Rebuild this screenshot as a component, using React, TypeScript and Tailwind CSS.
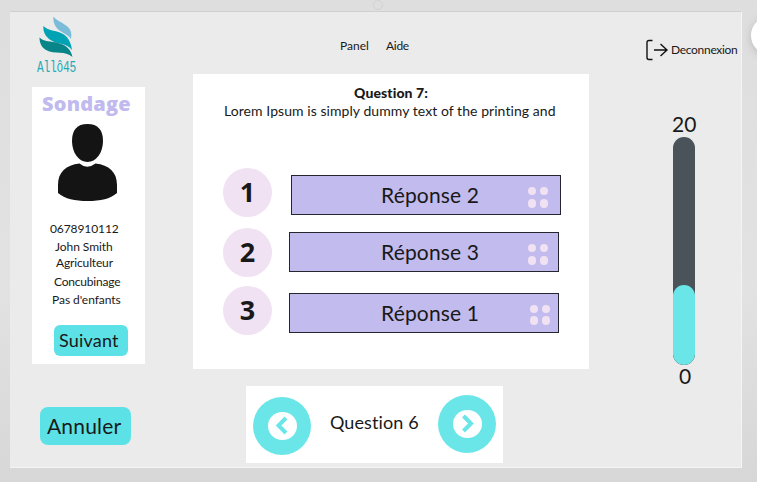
import React from "react";

const profile = [
  { text: "0678910112", style: "mt-[19px] pl-[18px] tracking-[-0.1px]" },
  { text: "John Smith", style: "mt-[2px] pl-[23px] tracking-[-0.05px]" },
  { text: "Agriculteur", style: "pl-[24px] tracking-[-0.15px]" },
  { text: "Concubinage", style: "mt-[3px] pl-[22px] tracking-[-0.2px]" },
  { text: "Pas d'enfants", style: "mt-[2px] pl-[20px] tracking-[-0.05px]" },
];

const answers = [
  {
    rank: 1,
    text: "Réponse 2",
    row: "h-[49px]",
    box: "ml-[19px] mt-[7px] w-[270px] pl-[89px]",
    dots: "mr-[12px] mt-[4px] gap-y-[4px]",
  },
  {
    rank: 2,
    text: "Réponse 3",
    row: "mt-[11px] h-[49px]",
    box: "ml-[17px] mt-[4px] w-[270px] pl-[91px]",
    dots: "mr-[10px] mt-[4px] gap-y-[4px]",
  },
  {
    rank: 3,
    text: "Réponse 1",
    row: "mt-[9px] h-[49px]",
    box: "ml-[17px] mt-[7px] w-[270px] pl-[91px]",
    dots: "mr-[8px] mt-[3px] gap-y-[3px]",
  },
];

function Dots({ className }: { className: string }) {
  return (
    <span className={`grid grid-cols-2 gap-x-[3.5px] ${className}`}>
      {[0, 1, 2, 3].map((n) => (
        <span key={n} className="size-[8.5px] rounded-full bg-[#f0e2f3]" />
      ))}
    </span>
  );
}

function Logo() {
  return (
    <svg className="ml-[28px] mt-[3px] h-[43px] w-[37px]" viewBox="0 0 37 43">
      <path d="M15.500 1.500C19 6 23 6.500 28 10.500C33 14 34 18 33 24C29 18 22 18 18 12C15.500 8 15 5 15.500 1.500Z" fill="#7bbdd9" />
      <path d="M5.500 11C10 16 16 15 23 18C30 21 33 27 34 35C28 27 18 30 11 24C6 19.500 5 15 5.500 11Z" fill="#00a3b3" />
      <path d="M1.500 22.500C6 27 13 26 20 28C29 30 33 35 34.500 42C27 35 17 40 8 35C3 32 1.500 27 1.500 22.500Z" fill="#078589" />
    </svg>
  );
}

function Person() {
  return (
    <svg className="ml-[26px] mt-[7px] h-[78px] w-[60px]" viewBox="0 0 60 78" fill="#141414">
      <path d="M29.5 0C40 0 45 6 45 17C45 29 38 38 29.5 38C21 38 14 29 14 17C14 6 19 0 29.5 0Z" />
      <path d="M21.5 39.5Q29 46 37.500 39.500C51 41 59 48 59 61V69C52 75 43 77 29.500 77C17 77 7 75 0 69V61C0 48 8 41 21.500 39.500Z" />
    </svg>
  );
}

function Arrow({ left }: { left?: boolean }) {
  return (
    <svg className="size-[58px]" viewBox="0 0 58 58">
      <circle cx="29" cy="29" r="29" fill="#6be6e8" />
      <ellipse cx="29.500" cy="29" rx="14.500" ry="14" fill="#fff" />
      <path
        d={left ? "M33 21L25.500 28.500L33 36" : "M25.500 21L33 28.500L25.500 36"}
        fill="none"
        stroke="#6be6e8"
        strokeWidth="4"
      />
    </svg>
  );
}

export default function App() {
  return (
    <div className="relative h-[482px] w-[757px] overflow-hidden bg-[linear-gradient(180deg,#dedede_0%,#e2e2e2_60%,#d7d7d7_100%)] pl-[10px] pt-[11px] font-['Lato',sans-serif] text-[#191919] [font-variant-ligatures:none]">
      <span className="absolute left-[373px] top-0 size-[10px] rounded-full border border-[#d2d2d2]" />
      <span className="absolute left-[751px] top-[16px] size-[39px] rounded-full bg-white shadow-[0_2px_8px_#bbbbbb]" />

      <div className="flex h-[457px] w-[732px] border-b border-r border-t border-b-[#f5f5f5] border-r-[#f5f5f5] border-t-[#cfcfcf] bg-[#ebebeb]">
        <aside className="w-[183px] shrink-0">
          <Logo />
          <div className="ml-[27px] mt-px h-[17px] w-[60px] origin-left scale-x-[0.7] whitespace-nowrap font-['Liberation_Mono',monospace] text-[16px] leading-[18px] tracking-[-0.3px] text-[#24a9b5]">
            Allô45
          </div>
          <section className="ml-[22px] mt-[11px] h-[277px] w-[113px] overflow-hidden bg-white">
            <h1 className="mt-[4px] whitespace-nowrap pl-[10px] font-['Open_Sans',sans-serif] text-[20px] font-extrabold leading-[26px] tracking-[0.2px] text-[#c1baef]">
              Sondage
            </h1>
            <Person />
            {profile.map((p) => (
              <p key={p.text} className={`whitespace-nowrap text-[12px] leading-[16px] ${p.style}`}>
                {p.text}
              </p>
            ))}
            <button className="ml-[22px] mt-[17px] block h-[31px] w-[74px] whitespace-nowrap rounded-[6px] bg-[#5ce2e6] pl-[5px] text-left text-[18px] leading-[31px] tracking-[0.2px]">
              Suivant
            </button>
          </section>
          <button className="ml-[30px] mt-[43px] block h-[38px] w-[91px] whitespace-nowrap rounded-[8px] bg-[#5ce2e6] pl-[7px] text-left text-[21px] leading-[38px] tracking-[0.2px]">
            Annuler
          </button>
        </aside>

        <main className="w-[396px] shrink-0">
          <nav className="flex h-[62px] whitespace-nowrap pl-[147px] pt-[26px] text-[12px] leading-[16px]">
            <a className="w-[46px]">Panel</a>
            <a className="tracking-[-0.3px]">Aide</a>
          </nav>
          <section className="h-[295px] w-[396px] bg-white pt-[9px]">
            <h2 className="pl-[161px] text-[14px] font-black leading-[20px] tracking-[0.1px]">Question 7:</h2>
            <p className="whitespace-nowrap pl-[31px] text-[14px] leading-[16px] tracking-[0.06px]">
              Lorem Ipsum is simply dummy text of the printing and
            </p>
            <div className="pl-[30px] pt-[49px]">
              {answers.map((a) => (
                <div key={a.rank} className={`flex ${a.row}`}>
                  <span className="flex size-[49px] shrink-0 items-center justify-center rounded-full bg-[#f0e2f3] font-['Open_Sans',sans-serif] text-[27px] font-bold">
                    {a.rank}
                  </span>
                  <div
                    className={`flex h-[40px] shrink-0 items-center justify-between whitespace-nowrap border border-[#25252f] bg-[#c2bbee] text-[21px] leading-[36px] tracking-[0.17px] ${a.box}`}
                  >
                    <span className="pb-px">{a.text}</span>
                    <Dots className={a.dots} />
                  </div>
                </div>
              ))}
            </div>
          </section>
          <section className="ml-[53px] mt-[17px] flex h-[77px] w-[257px] bg-white">
            <div className="ml-[7px] mt-[11px]">
              <Arrow left />
            </div>
            <span className="mt-[23px] w-[127px] whitespace-nowrap pl-[19px] text-[18px] leading-[26px] tracking-[0.1px]">
              Question 6
            </span>
            <div className="mt-[9px]">
              <Arrow />
            </div>
          </section>
        </main>

        <aside className="flex-1">
          <div className="flex h-[49px] items-end whitespace-nowrap pl-[57px]">
            <svg className="h-[22px] w-[24px] shrink-0" viewBox="0 0 24 22" fill="none" stroke="#111" strokeWidth="1.400">
              <path d="M6.500 1.500H3Q1 1.500 1 3.500V18.500Q1 20.500 3 20.500H6.500M8 11H21M14.500 5L21 11L14.500 17" />
            </svg>
            <span className="pb-px pl-px text-[12px] leading-[21px] tracking-[-0.3px]">Deconnexion</span>
          </div>
          <div className="ml-[83px] mt-[50px] h-[26px] text-[21px] leading-[25px]">20</div>
          <div className="ml-[84px] flex h-[228px] w-[22px] items-end overflow-hidden rounded-[11px] bg-[#4a525a]">
            <div className="h-[80px] w-[22px] rounded-[11px] bg-[#6be6e8]" />
          </div>
          <div className="ml-[90px] text-[21px] leading-[22px]">0</div>
        </aside>
      </div>
    </div>
  );
}
